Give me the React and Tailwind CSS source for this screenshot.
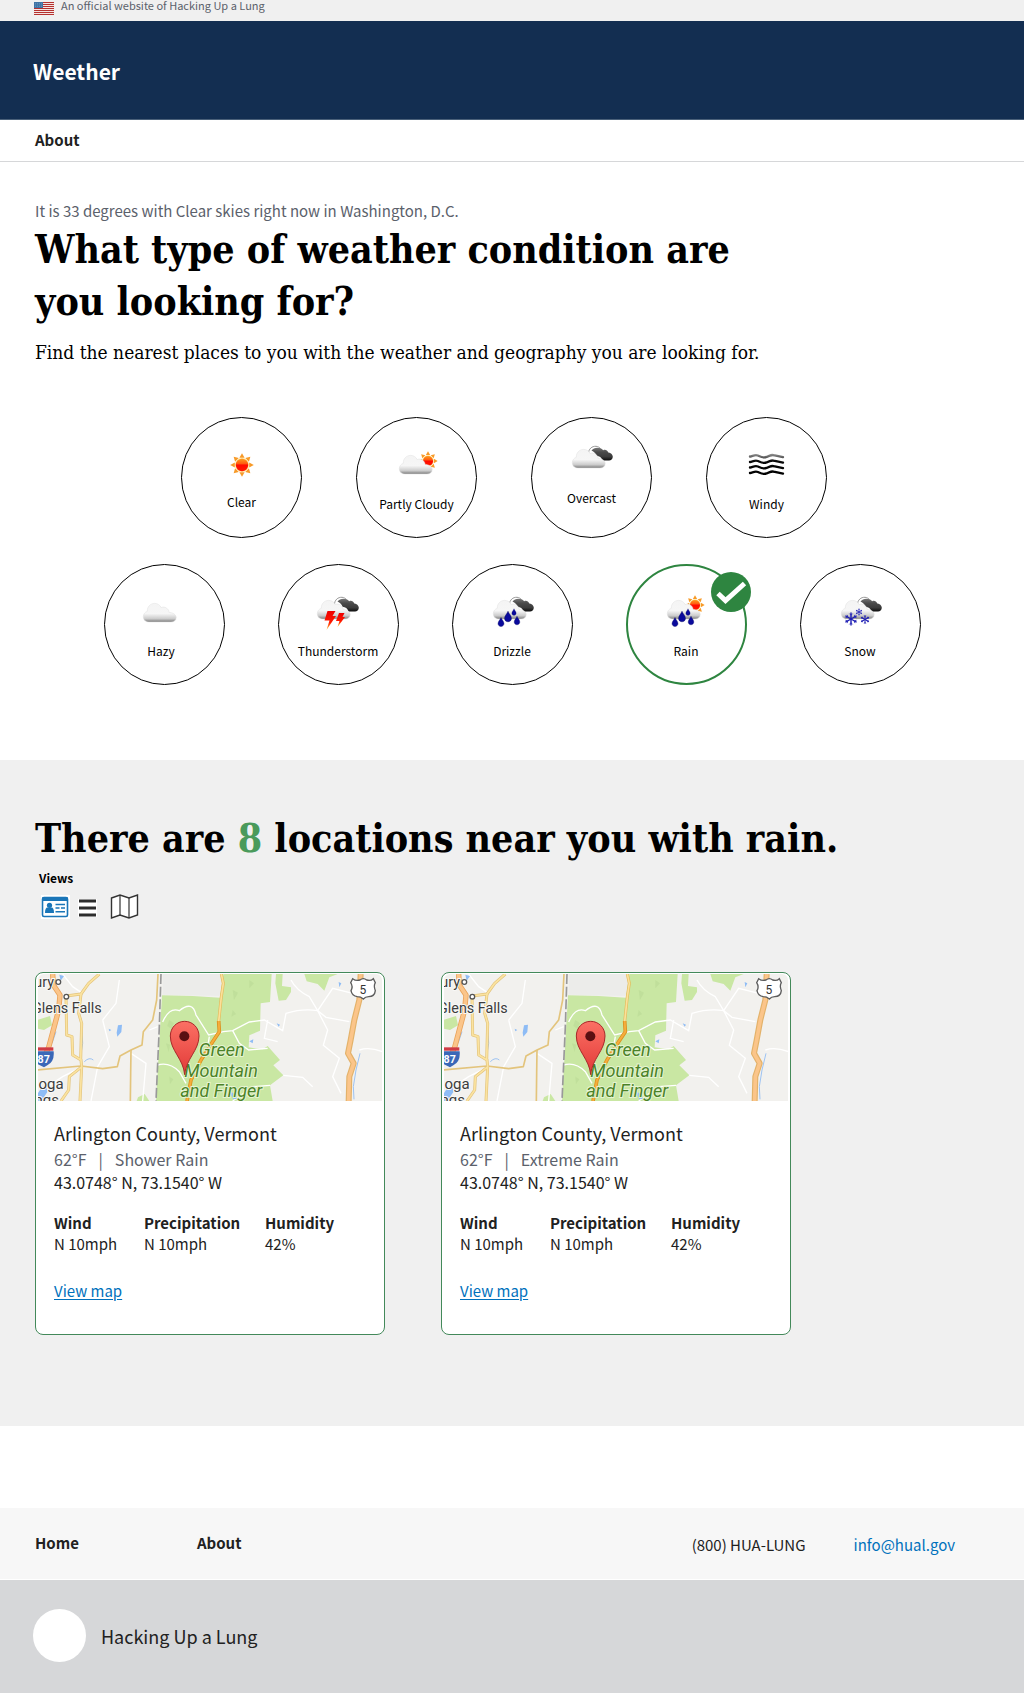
import { useState } from "react";

const SANS = "font-['Noto_Sans_CJK_SC','Open_Sans',sans-serif]";
const SERIF = "font-['DejaVu_Serif_Condensed','DejaVu_Serif',serif]";

function Defs() {
  return (
    <svg className="absolute h-0 w-0" aria-hidden="true">
      <defs>
        <linearGradient id="cloudLight" x1="0" y1="0" x2="0" y2="1">
          <stop offset="0" stopColor="#f4f4f4" />
          <stop offset="0.55" stopColor="#f6f6f6" />
          <stop offset="0.82" stopColor="#cccccc" />
          <stop offset="1" stopColor="#7c7c7c" />
        </linearGradient>
        <linearGradient id="cloudDark" x1="0" y1="0" x2="0" y2="1">
          <stop offset="0" stopColor="#777777" />
          <stop offset="0.35" stopColor="#4b4b4b" />
          <stop offset="0.7" stopColor="#3c3c3c" />
          <stop offset="1" stopColor="#0c0c0c" />
        </linearGradient>
        <linearGradient id="sunCore" x1="0" y1="0" x2="0" y2="1">
          <stop offset="0" stopColor="#ff9a1c" />
          <stop offset="0.4" stopColor="#ff5a10" />
          <stop offset="0.5" stopColor="#ff0a00" />
          <stop offset="1" stopColor="#ff1a00" />
        </linearGradient>
        <linearGradient id="bolt" x1="0" y1="0" x2="0" y2="1">
          <stop offset="0" stopColor="#ee0000" />
          <stop offset="0.6" stopColor="#ff1800" />
          <stop offset="1" stopColor="#ffd23c" />
        </linearGradient>
        <linearGradient id="wave" x1="0" y1="16" x2="0" y2="38" gradientUnits="userSpaceOnUse">
          <stop offset="0" stopColor="#a0a0a0" />
          <stop offset="0.25" stopColor="#4a4a4a" />
          <stop offset="0.35" stopColor="#0a0a0a" />
          <stop offset="1" stopColor="#000000" />
        </linearGradient>
        <linearGradient id="pin" x1="0" y1="0" x2="0" y2="1">
          <stop offset="0" stopColor="#fb7064" />
          <stop offset="1" stopColor="#e23a38" />
        </linearGradient>
      </defs>
    </svg>
  );
}

function Sun({ x, y, r }) {
  return (
    <g transform={`translate(${x} ${y}) scale(${r / 11})`}>
      {[0, 45, 90, 135, 180, 225, 270, 315].map((a) => (
        <path key={a} d="M-2.6 -7.2 L0 -11.8 L2.6 -7.2 Z" fill="#f79a28" transform={`rotate(${a})`} />
      ))}
      <circle r="7" fill="#ffe08a" />
      <circle r="6.2" fill="url(#sunCore)" />
    </g>
  );
}

function Cloud({ x, y }) {
  return (
    <path
      transform={`translate(${x} ${y})`}
      d="M6 19 C2.200 19 0.300 16.500 0.300 13.700 C0.300 11.200 2 9 4.300 8.300 C3.900 4 7.500 0.400 11.600 0.400 C14.600 0.400 17 2 18.200 4.600 C19.600 3.800 22 4 23.300 5 C25 6 26 7.600 26.200 9.500 C30 9.500 33.200 11.800 33.200 14.500 C33.200 17.300 31.200 19 28 19 Z"
      fill="url(#cloudLight)"
      stroke="#dedede"
      strokeWidth="0.500"
    />
  );
}

function DarkCloud({ x, y }) {
  return (
    <g transform={`translate(${x} ${y})`}>
      <path d="M-3.500 7.500 C-3.500 3 0 0 4 0.300 C6 0.500 7 1.200 8 2" fill="none" stroke="#8c8c8c" strokeWidth="0.900" />
      <path
        d="M-0.500 4.500 C1.500 1 8.500 0.500 11.300 4.200 C13 3.200 15.400 4 16.200 6.500 C18.500 6.600 20.800 8.400 20.800 10.800 C20.800 13.200 19 14.500 17 14.500 L10.500 14.500 C9.500 11.500 7.500 10 4.500 9.800 C4 7.500 2 5.500 -0.500 4.500 Z"
        fill="url(#cloudDark)"
      />
    </g>
  );
}

function Drop({ x, y, s }) {
  return (
    <path
      transform={`translate(${x} ${y}) scale(${s})`}
      d="M0 -5 C0.800 -2.500 3.300 -0.800 3.300 1.800 C3.300 3.700 1.800 5 0 5 C-1.800 5 -3.300 3.700 -3.300 1.800 C-3.300 -0.800 -0.800 -2.500 0 -5 Z"
      fill="#0a0a9c"
      stroke="#04045e"
      strokeWidth="0.400"
    />
  );
}

function Flake({ x, y, r }) {
  return (
    <g transform={`translate(${x} ${y}) scale(${r / 6})`} stroke="#1f1fb4" fill="none">
      {[0, 60, 120, 180, 240, 300].map((a) => (
        <g key={a} transform={`rotate(${a})`}>
          <path d="M0 0 V-6" strokeWidth="1.300" />
          <path d="M-1.500 -5 L0 -3.500 L1.500 -5" strokeWidth="0.700" />
        </g>
      ))}
    </g>
  );
}

function Drops({ x }) {
  return (
    <g transform={`translate(${x} 0)`}>
      <Drop x={14} y={38} s={0.9} />
      <Drop x={21} y={32.5} s={1.05} />
      <Drop x={27} y={28} s={0.65} />
      <Drop x={30} y={36.5} s={0.85} />
    </g>
  );
}

const DRAWINGS = {
  Clear: <Sun x={25} y={30} r={11} />,
  "Partly Cloudy": (
    <>
      <Sun x={36} y={24} r={9} />
      <Cloud x={7} y={18} />
    </>
  ),
  Overcast: (
    <>
      <DarkCloud x={25} y={15} />
      <Cloud x={5} y={18} />
    </>
  ),
  Windy: (
    <g fill="none" stroke="url(#wave)" strokeWidth="2.300" strokeLinecap="round">
      {[19.5, 25, 30.5, 36].map((y) => (
        <path key={y} d={`M8 ${y} C11 ${y - 0.6} 13 ${y - 2.2} 16 ${y - 1} C19 ${y + 0.4} 21 ${y + 1.8} 24.500 ${y + 0.4} C28 ${y - 1.4} 30 ${y - 2.4} 33 ${y - 1} L41 ${y + 0.6}`} />
      ))}
    </g>
  ),
  Hazy: <Cloud x={7} y={19} />,
  Thunderstorm: (
    <>
      <DarkCloud x={25} y={13} />
      <Cloud x={4} y={16} />
      <path d="M14.500 27 H22.500 L19.500 32 H23 L13.500 46 L16.500 36.500 H11.500 Z" fill="url(#bolt)" />
      <path d="M26 29 H31.500 L29.500 33 H32 L24.500 43 L26.500 37 H23 Z" fill="url(#bolt)" />
    </>
  ),
  Drizzle: (
    <>
      <DarkCloud x={26} y={13} />
      <Cloud x={6} y={16} />
      <Drops x={0} />
    </>
  ),
  Rain: (
    <>
      <Sun x={34} y={21} r={9} />
      <Cloud x={6} y={16} />
      <Drops x={0} />
    </>
  ),
  Snow: (
    <>
      <DarkCloud x={26} y={13} />
      <Cloud x={6} y={16} />
      <Flake x={16} y={35} r={6.5} />
      <Flake x={24} y={28} r={3.5} />
      <Flake x={30} y={35.5} r={4.5} />
    </>
  ),
};

function Condition({ name, selected, onSelect, nudge = "" }) {
  return (
    <button
      type="button"
      aria-pressed={selected}
      onClick={() => onSelect(name)}
      className={`relative flex h-[121px] w-[121px] shrink-0 flex-col items-center justify-center rounded-full bg-white ${
        selected ? "border-2 border-[#2e8540]" : "border border-black"
      }`}
    >
      <span className={`flex flex-col items-center ${nudge || "pb-1"}`}>
        <svg viewBox="0 0 50 56" className="h-[56px] w-[50px]" aria-hidden="true">
          {DRAWINGS[name]}
        </svg>
        <span className="text-[12px] leading-[21px] whitespace-nowrap text-black">{name}</span>
      </span>
      {selected && (
        <svg viewBox="0 0 40 40" className="absolute top-1.5 -right-1.5 h-10 w-10" aria-hidden="true">
          <circle cx="20" cy="20" r="20" fill="#2e8540" />
          <path d="M7 21.500 L14.500 28.500 L33.500 11.500" fill="none" stroke="#fff" strokeWidth="5" />
        </svg>
      )}
    </button>
  );
}

function Flag() {
  return (
    <svg viewBox="0 0 20 13" className="mt-0.5 h-[13px] w-5" aria-hidden="true">
      <rect width="20" height="13" fill="#f4e4e2" />
      {[0, 2, 4, 6, 8, 10, 12].map((y) => (
        <rect key={y} y={y} width="20" height="1" fill="#b5312f" />
      ))}
      <rect width="9" height="6" fill="#3f74a5" />
      <path d="M1 1.500 H8 M1 3 H8 M1 4.500 H8" stroke="#7ba3c6" strokeWidth="0.500" strokeDasharray="1 1" />
    </svg>
  );
}

function MapPicture() {
  return (
    <svg
      viewBox="54 42 1036 381"
      preserveAspectRatio="xMidYMin slice"
      className="block h-[127px] w-full rounded-t-md"
      role="img"
      aria-label="Map of Green Mountain and Finger Lakes"
    >
      <rect x="0" y="0" width="1200" height="500" fill="#f2f1ee" />
      <path d="M430 40 H610 V108 L430 104 Z" fill="#ececea" />
      <path
        d="M428 106 L520 108 L602 113 L612 42 H757 L752 126 L724 130 L722 212 L690 226 L688 262 L730 268 L745 258 L782 300 L762 316 L792 346 L752 376 L760 423 H410 Z"
        fill="#c9e7a3"
      />
      <path d="M770 42 H790 L788 78 L815 82 V96 L800 120 L778 122 L768 70 Z M855 42 H955 L930 52 L915 92 L895 72 L862 64 Z M54 180 L92 168 L98 196 L74 210 L54 206 Z M356 412 L376 402 L390 423 H352 Z" fill="#c9e7a3" />
      <g fill="#bcdc97" opacity="0.700">
        <path d="M450 180 l14 10 -8 16 -12 -8z M520 210 l12 8 -8 20z M440 250 l12 4 -4 22z M640 90 l16 8 -12 22z M690 60 l14 10 -14 14z M590 380 l18 8 -12 18z M700 330 l20 10 -20 16z M450 350 l12 8 -10 14z M640 150 l10 12 -14 8z" />
      </g>
      <g fill="none" stroke="#ffffff" strokeWidth="4">
        <path d="M430 186 Q450 140 480 152 Q520 120 530 165 L568 225 L612 215 L640 212 L690 186 L735 180 L790 212 L800 160 Q850 145 895 152 L920 172 L990 185" />
        <path d="M640 212 L660 250 L688 270 L745 265 M895 152 L940 85 L1000 100 M895 152 L925 210 L912 256 L960 295 L940 350 L965 400" />
        <path d="M415 315 Q450 305 480 335 L500 370 M745 180 L735 235 L775 245 M792 346 L850 352 L880 380 M1020 270 Q1050 260 1090 275" />
        <path d="M130 42 L160 80 L190 100 M250 180 L270 260 L235 320 L215 423 M250 180 L290 130 L300 60 M54 400 L130 350 L190 320 M335 280 L380 310 L370 423 M415 200 L390 210" />
        <path d="M815 60 Q830 90 870 110 L895 152 M640 423 L700 380 L752 376 M570 230 L560 290" />
      </g>
      <g fill="#8ebcf5">
        <path d="M296 196 l12 -2 -2 22 -12 14 -2 -12z M268 206 l8 4 -6 4z M62 390 L82 372 L84 396 L66 423 H54 V402 Z M772 190 l10 4 -4 6z M690 244 l12 -6 -2 12z M958 66 l8 4 -6 12z M628 392 l14 8 14 16 -14 2z M120 44 l14 4 -10 14z" />
      </g>
      <g fill="none" stroke="#9dc3f3" strokeWidth="3">
        <path d="M187 190 L190 250 L182 300 M195 305 Q210 290 222 300 M1022 280 L1010 330 L1002 380 L1004 418 M110 215 L98 250" />
      </g>
      <path d="M425 42 L420 200 L410 423" fill="none" stroke="#999999" strokeWidth="5" strokeDasharray="30 8" />
      <g fill="none" stroke="#e3c47c" strokeLinejoin="round">
        <path d="M416 42 L412 120 L400 180 L372 215 L368 255 L335 270 L302 288 L294 320 L250 326 L185 318 L54 330" strokeWidth="5" />
        <path d="M335 270 L334 340 L333 423" strokeWidth="5" />
        <path d="M240 42 L208 70 L185 102 L140 108 L142 225 L158 230 L160 285 L185 300 L187 320 L182 423" strokeWidth="9" />
        <path d="M185 102 L178 160 L187 190 L184 300 M185 322 L150 350 L148 390 L125 423" strokeWidth="9" />
      </g>
      <g fill="none" stroke="#fbe3a0" strokeLinejoin="round">
        <path d="M240 42 L208 70 L185 102 L140 108 L142 225 L158 230 L160 285 L185 300 L187 320 L182 423" strokeWidth="5" />
        <path d="M185 102 L178 160 L187 190 L184 300 M185 322 L150 350 L148 390 L125 423" strokeWidth="5" />
      </g>
      <g fill="none" strokeLinejoin="round">
        <path d="M100 42 L102 75 L122 105 L118 150 L102 210 L88 262 L75 290" stroke="#e9a35a" strokeWidth="16" />
        <path d="M100 42 L102 75 L122 105 L118 150 L102 210 L88 262 L75 290" stroke="#fbc58a" strokeWidth="11" />
        <path d="M1024 42 L1020 120 L1005 180 L994 240 L986 280 L1003 310 L990 350 L988 423" stroke="#e3b26a" strokeWidth="18" />
        <path d="M1024 42 L1020 120 L1005 180 L994 240 L986 280 L1003 310 L990 350 L988 423" stroke="#fbc58a" strokeWidth="11" />
        <path d="M606 42 L612 70 L606 110 L598 185" stroke="#e4bc5c" strokeWidth="9" />
        <path d="M606 42 L612 70 L606 110 L598 185" stroke="#fbe09a" strokeWidth="5" />
        <path d="M598 183 L600 215 L580 245 L545 300 L515 360 L503 423" stroke="#dc8f1e" strokeWidth="11" />
        <path d="M598 183 L600 215 L580 245 L545 300 L515 360 L503 423" stroke="#f5ad3c" strokeWidth="6" />
      </g>
      <path d="M54 262 H102 V272 H54 Z" fill="#cf3b45" />
      <path d="M54 274 H103 Q106 304 84 316 L74 322 L54 312 Z" fill="#3a68b8" />
      <g fill="#ffffff" stroke="#555555" strokeWidth="4">
        <circle cx="117" cy="66" r="7" />
        <circle cx="141" cy="110" r="7" />
      </g>
      <path
        d="M1000 56 Q1010 64 1022 60 Q1032 52 1042 60 Q1054 64 1062 56 L1068 68 Q1062 78 1068 92 Q1066 110 1048 110 Q1038 110 1032 117 Q1024 110 1014 110 Q998 108 995 92 Q1002 80 994 68 Z"
        fill="#ffffff"
        stroke="#5c5c5c"
        strokeWidth="4"
      />
      <g fontFamily="Roboto, sans-serif">
        <text x="1031" y="102" textAnchor="middle" fontSize="36" fill="#333333">5</text>
        <text x="73" y="308" textAnchor="middle" fontSize="32" fontWeight="700" fill="#ffffff">87</text>
        <g fill="#3c3c3c" stroke="#f8f8f6" strokeWidth="6" paintOrder="stroke" fontSize="43" textAnchor="end">
          <text x="104" y="81">ury</text>
          <text x="247" y="158">Glens Falls</text>
          <text x="133" y="386" fontSize="45">oga</text>
          <text x="119" y="436" fontSize="45">ngs</text>
        </g>
        <g fill="#4b8228" stroke="#e6f4d2" strokeWidth="6" paintOrder="stroke" fontStyle="italic" fontSize="54" textAnchor="middle">
          <text x="607" y="289">Green</text>
          <text x="605" y="350">Mountain</text>
          <text x="606" y="411">and Finger</text>
        </g>
      </g>
      <path
        d="M496 344 C492 296 453 272 453 228 C453 203 472 184 496 184 C520 184 539 203 539 228 C539 272 500 296 496 344 Z"
        fill="url(#pin)"
        stroke="#a8282a"
        strokeWidth="3"
      />
      <circle cx="495" cy="229" r="15" fill="#5a0f12" />
    </svg>
  );
}

function LocationCard({ condition }) {
  const stats = [
    ["Wind", "N 10mph", "w-[90px]"],
    ["Precipitation", "N 10mph", "w-[121px]"],
    ["Humidity", "42%", ""],
  ];
  return (
    <article className="w-[350px] max-w-full rounded-lg border border-[#43895a] bg-white text-[#212121]">
      <div className="px-0.5 pt-px">
        <MapPicture />
      </div>
      <div className="px-[18px] pt-[18px] pb-[31px] text-[15px]">
        <h3 className="text-lg leading-7">Arlington County, Vermont</h3>
        <p className="flex gap-3 text-base leading-6 text-[#5b616b]">
          <span>62°F</span>
          <span>|</span>
          <span>{condition}</span>
        </p>
        <p className="text-base leading-[22px]">43.0748° N, 73.1540° W</p>
        <dl className="mt-[19px] flex leading-[21px]">
          {stats.map(([label, value, width]) => (
            <div key={label} className={width}>
              <dt className="font-bold">{label}</dt>
              <dd>{value}</dd>
            </div>
          ))}
        </dl>
        <a href="#map" className="mt-[26px] inline-block leading-[22px] text-[#0071bc] underline underline-offset-2">
          View map
        </a>
      </div>
    </article>
  );
}

export default function App() {
  const [selected, setSelected] = useState("Rain");
  return (
    <div className={`${SANS} bg-white text-[#212121]`}>
      <Defs />
      <div className="flex h-[21px] items-start gap-[7px] bg-[#f0f0f0] px-[34px]">
        <Flag />
        <p className="text-[11px] leading-[11px] text-[#5b616b]">An official website of Hacking Up a Lung</p>
      </div>
      <header>
        <div className="flex h-[99px] items-center border-b border-[#4a6079] bg-[#132e51] px-[33px] pt-1">
          <p className="text-[21px] font-bold text-white">Weether</p>
        </div>
        <nav className="flex h-[42px] items-center border-b border-[#d6d7d9] px-[35px]">
          <a href="#about" className="text-[15px] font-bold">About</a>
        </nav>
      </header>

      <main>
        <section className="px-[35px] pt-[37px] pb-[75px]">
          <p className="text-[15px] leading-6 text-[#5b616b]">
            It is 33 degrees with Clear skies right now in Washington, D.C.
          </p>
          <h1 className={`${SERIF} max-w-[740px] text-[39px] leading-[52px] font-bold text-black`}>
            What type of weather condition are you looking for?
          </h1>
          <p className={`${SERIF} mt-[11px] text-[19px] leading-7 text-black`}>
            Find the nearest places to you with the weather and geography you are looking for.
          </p>
          <div className="mt-[51px] flex flex-wrap justify-center gap-[54px] pr-4">
            <Condition name="Clear" nudge="pb-2" selected={selected === "Clear"} onSelect={setSelected} />
            <Condition name="Partly Cloudy" selected={selected === "Partly Cloudy"} onSelect={setSelected} />
            <Condition name="Overcast" nudge="pb-4" selected={selected === "Overcast"} onSelect={setSelected} />
            <Condition name="Windy" selected={selected === "Windy"} onSelect={setSelected} />
          </div>
          <div className="mt-[26px] flex flex-wrap justify-center gap-[53px]">
            <Condition name="Hazy" nudge="pr-1.5 pb-1" selected={selected === "Hazy"} onSelect={setSelected} />
            {["Thunderstorm", "Drizzle", "Rain", "Snow"].map((name) => (
              <Condition key={name} name={name} selected={selected === name} onSelect={setSelected} />
            ))}
          </div>
        </section>

        <section className="bg-[#f0f0f0] px-[35px] pt-[52px] pb-[91px]">
          <h2 className={`${SERIF} text-[39px] leading-[52px] font-bold text-black`}>
            There are <span className="text-[#4a9a5b]">8</span> locations near you with rain.
          </h2>
          <p className="mt-1 pl-1 text-[12px] leading-5 font-bold text-black">Views</p>
          <div className="mt-1.5 flex items-center pl-1.5">
            <button type="button" aria-label="Card view" className="bg-white">
              <svg viewBox="0 0 29 24" className="h-6 w-[29px]">
                <rect x="1.500" y="2.500" width="25" height="19" rx="1.500" fill="#fff" stroke="#1a76b8" strokeWidth="1.600" />
                <path d="M1 2.500 h26 v3.500 h-26 z" fill="#1a76b8" />
                <circle cx="8.500" cy="10.300" r="2.600" fill="#1a76b8" />
                <path d="M4 18 Q4 12.500 6.500 12.500 H10.500 Q13 12.500 13 18 Z" fill="#1a76b8" />
                <path d="M14.500 9.500 H24 M14.500 13 H18.500 M20 13 H24 M14.500 16.800 H24" stroke="#1a76b8" strokeWidth="1.400" />
              </svg>
            </button>
            <button type="button" aria-label="List view" className="ml-2">
              <svg viewBox="0 0 20 24" className="h-6 w-5">
                <rect x="0" y="4" width="19" height="18" fill="#fff" />
                <path d="M1 6 H18 M1 13 H18 M1 20 H18" stroke="#2d2d2d" strokeWidth="3" />
              </svg>
            </button>
            <button type="button" aria-label="Map view" className="ml-3">
              <svg viewBox="0 0 29 25" className="h-[25px] w-[29px]">
                <path d="M1.500 4 L10 1 L19 4 L27.500 1 V21 L19 24 L10 21 L1.500 24 Z" fill="#fff" stroke="#333" strokeWidth="1.400" />
                <path d="M10 1 V21 M19 4 V24" stroke="#333" strokeWidth="1.200" />
              </svg>
            </button>
          </div>
          <div className="mt-[53px] flex flex-wrap gap-14">
            <LocationCard condition="Shower Rain" />
            <LocationCard condition="Extreme Rain" />
          </div>
        </section>
      </main>

      <footer className="mt-[82px]">
        <div className="flex h-[72px] items-center border-b border-white bg-[#f7f7f7] pr-[69px] pl-[35px] text-[15px]">
          <nav className="flex gap-[118px] font-bold">
            <a href="#home">Home</a>
            <a href="#about">About</a>
          </nav>
          <div className="ml-auto flex gap-12 pt-1">
            <span>(800) HUA-LUNG</span>
            <a href="mailto:info@hual.gov" className="text-[#0071bc]">info@hual.gov</a>
          </div>
        </div>
        <div className="flex h-[114px] items-center gap-[15px] bg-[#d6d7d9] px-[33px] pb-0.5">
          <span className="h-[53px] w-[53px] rounded-full bg-white" />
          <p className="text-lg">Hacking Up a Lung</p>
        </div>
      </footer>
    </div>
  );
}
